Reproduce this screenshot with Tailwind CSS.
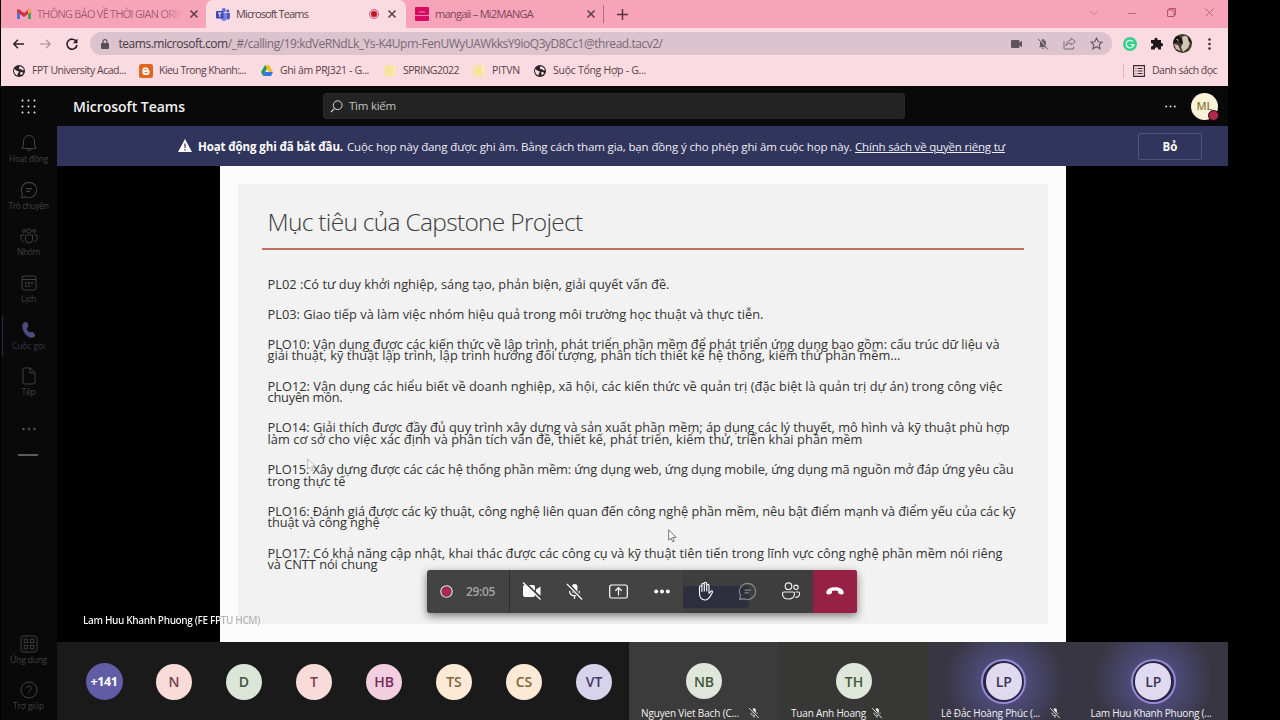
<!DOCTYPE html>
<html lang="vi">
<head>
<meta charset="utf-8">
<title>Microsoft Teams</title>
<script src="https://cdn.jsdelivr.net/npm/@tailwindcss/browser@4"></script>
</head>
<body class="h-[720px] w-[1280px] overflow-hidden bg-black pl-px font-['Open_Sans','Noto_Sans',sans-serif] [font-stretch:93%]">
<svg class="hidden">
  <symbol id="x" viewBox="0 0 10 10"><path d="M1.5 1.5l7 7M8.5 1.5l-7 7" stroke="currentColor" stroke-width="1.5" fill="none"/></symbol>
  <symbol id="globe" viewBox="0 0 12 12"><circle cx="6" cy="6" r="6" fill="#2b2428"/><path d="M1 4.2c1.800 .2 2.200 1.600 3.600 1.700 1.600.1 1.500 1.500.6 2.200-.8.700-.3 1.700-1 2.400C2.400 9.700 1.200 8 1 6zM6.600 1.200c.2 1-1 1.200-.6 2.200.5 1 1.900.2 2.500 1.200.5.900 1.500.6 2.400.3-.2-1.500-1.800-3.400-4.300-3.700zM7.500 7.300c1-.5 2 .1 2.700.6-.6 1-1.300 1.800-2.300 2.300-.3-1-1.200-1.800-.4-2.900z" fill="#fadbe1"/></symbol>
  <symbol id="folder" viewBox="0 0 12 12"><rect x=".5" y=".5" width="11" height="11" rx="1" fill="#f6e49c"/><path d="M9 .5h2.500v8L9 11z" fill="#f9ecb8"/></symbol>
  <symbol id="micoff" viewBox="0 0 20 20"><rect x="7.300" y="2" width="5.800" height="10" rx="2.900" fill="currentColor"/><path d="M4.800 9.500c0 3 2.200 5 5.200 5s5.200-2 5.200-5M10 14.500V18" fill="none" stroke="currentColor" stroke-width="1.300"/><path d="M2.500 1.500L18 18.500" stroke="#3e3e3e" stroke-width="3.600"/><path d="M2 2l16 16.500" stroke="currentColor" stroke-width="1.400"/></symbol>
  <symbol id="chat" viewBox="0 0 20 20"><path d="M10 1.500a8.500 8.500 0 1 1-4 16L1.700 18.600l1.100-4.200A8.500 8.500 0 0 1 10 1.500zM6.800 8.500h6.600M6.800 11.500h4.500" fill="none" stroke="currentColor" stroke-width="1.200" stroke-linejoin="round"/></symbol>
</svg>

<div class="flex h-full w-[1227px] flex-col">
  <!-- browser tabs -->
  <header class="flex h-[86px] shrink-0 flex-col bg-[#fadbe1] text-[11px] text-[#5b3e4a]">
    <div class="flex h-7 items-center bg-[#f7a3b9]">
      <div class="flex h-full w-[205px] items-center pl-4">
        <svg class="h-[11px] w-[14px]" viewBox="0 0 14 11"><path d="M0 1.500V10h3V5z" fill="#4a78d8"/><path d="M14 1.500V10h-3V5z" fill="#45a35b"/><path d="M0 1.800C0 .3 1.800 0 2.800.8L7 4l4.200-3.200c1-.8 2.800-.5 2.800 1V3L7 8 0 3z" fill="#cf3542"/><path d="M11 1l2-.8 1 1.300V3l-3 2z" fill="#e9b93e"/></svg>
        <span data-fit class="ml-[6px] w-[145px] whitespace-nowrap bg-linear-to-r from-[#9c5c72] from-88% to-[#f7a3b9] bg-clip-text text-transparent">THÔNG BÁO VỀ THỜI GIAN ORIE</span>
        <svg class="ml-[7px] size-[10px]"><use href="#x"/></svg>
      </div>
      <div class="flex h-full w-[200px] items-center rounded-t-[7px] bg-[#fadbe1] pl-[10px]">
        <svg class="h-[13px] w-[14px]" viewBox="0 0 14 13"><circle cx="11.800" cy="3" r="1.500" fill="#5059c9"/><circle cx="7.800" cy="2.200" r="2.100" fill="#6a72d8"/><path d="M9 5h5v4c0 2-1.500 3-3 2.500z" fill="#5059c9"/><path d="M5 5h6v4.500C11 12 9.500 13 8 13s-3-1-3-3z" fill="#7680e0"/><rect y="3" width="7.500" height="7.500" rx=".8" fill="#3f49b4"/><path d="M2 5h3.600M3.800 5v4" stroke="#fff" stroke-width="1"/></svg>
        <span data-fit class="ml-[6px] w-[72px] whitespace-nowrap">Microsoft Teams</span>
        <svg class="ml-[61px] size-[10px]" viewBox="0 0 10 10"><circle cx="5" cy="5" r="4.400" fill="none" stroke="#b9303f" stroke-width=".8"/><circle cx="5" cy="5" r="3" fill="#bd1526"/></svg>
        <svg class="ml-[8px] size-[10px]"><use href="#x"/></svg>
      </div>
      <svg class="ml-[9px] size-[14px]" viewBox="0 0 14 14"><rect width="14" height="14" rx="1" fill="#d80b62"/><path d="M0 8.500h14M4 5h6" stroke="#f383b4" stroke-width="1.200"/></svg>
      <span data-fit class="ml-[6px] w-[98px] whitespace-nowrap text-[#7d4659]">mangaii – Mi2MANGA</span>
      <svg class="ml-[53px] size-[10px]"><use href="#x"/></svg>
      <i class="ml-[7px] h-[18px] w-px bg-[#b76b80]"></i>
      <svg class="ml-[13px] size-[11px]" viewBox="0 0 11 11"><path d="M5.500 0v11M0 5.500h11" stroke="#5b2f3e" stroke-width="1.400"/></svg>
      <svg class="ml-[461px] mb-[3px] h-[6px] w-[10px]" viewBox="0 0 10 6"><path d="M1 1l4 3.500L9 1" fill="none" stroke="#d0809a"/></svg>
      <svg class="ml-[29px] mb-[3px] h-[10px] w-[8px]" viewBox="0 0 8 10"><path d="M0 5.500h8" stroke="#b9647e"/></svg>
      <svg class="ml-[31px] mb-[3px] size-[9px]" viewBox="0 0 9 9"><path d="M.5 2h6.500v6.500H.5zM2 2V.5h6.500V7H7" fill="none" stroke="#b9506e"/></svg>
      <svg class="ml-[29px] mb-[3px] size-[9px]" viewBox="0 0 9 9"><path d="M.5.500l8 8M8.500.500l-8 8" stroke="#b9647e" fill="none"/></svg>
    </div>
    <!-- address bar -->
    <div class="flex h-[31px] items-center pl-3">
      <svg class="h-[10px] w-[11px]" viewBox="0 0 11 10"><path d="M11 5H1M5 .8L.8 5 5 9.200" fill="none" stroke="#2a2025" stroke-width="1.400"/></svg>
      <svg class="ml-4 h-[10px] w-[11px]" viewBox="0 0 11 10"><path d="M0 5h10M6 .8L10.200 5 6 9.200" fill="none" stroke="#a58b95" stroke-width="1.200"/></svg>
      <svg class="ml-[15px] size-[12px]" viewBox="0 0 12 12"><path d="M10.300 3.500A5 5 0 1 0 11 7" fill="none" stroke="#2a2025" stroke-width="1.600"/><path d="M11.500.5v4.700H6.800z" fill="#2a2025"/></svg>
      <div class="ml-[12px] flex h-[23px] w-[1022px] items-center rounded-full bg-[#dcc3cd] pl-[11px] text-[12px] text-[#7b6872]">
        <svg class="h-[10px] w-[8px]" viewBox="0 0 8 10"><rect y="4" width="8" height="6" rx="1" fill="#5a4c55"/><path d="M2 4V2.700a2 2 0 0 1 4 0V4" fill="none" stroke="#5a4c55" stroke-width="1.200"/></svg>
        <span data-fit class="ml-[9.500px] w-[544px] whitespace-nowrap"><span class="text-[#4a3a43]">teams.microsoft.com</span>/_#/calling/19:kdVeRNdLk_Ys-K4Uprn-FenUWyUAWkksY9ioQ3yD8Cc1@thread.tacv2/</span>
        <svg class="ml-[348px] h-[8px] w-[11px]" viewBox="0 0 11 8"><rect width="8.500" height="8" rx="1" fill="#5f545c"/><path d="M8 3l3-2.300v6.600L8 5z" fill="#5f545c"/></svg>
        <svg class="ml-[15px] size-[12px]" viewBox="0 0 12 12"><path d="M2 9.300h8L9 8V5a3 3 0 0 0-6 0v3zM5 10h2a1 1 0 0 1-2 0zM5.200 2V1h1.600v1z" fill="#665a62"/><path d="M2 .5l9 10.800" stroke="#dcc3cd" stroke-width="1.100"/><path d="M1 .8l9.700 10.700" stroke="#665a62"/></svg>
        <svg class="ml-[14px] size-[13px]" viewBox="0 0 13 13"><path d="M1 4v8h9.500V9.500M8 3V1l4.500 3.700L8 8V6C5.500 6 4 7 3 9c.2-3.500 2-5.700 5-6z" fill="none" stroke="#7d6c76"/></svg>
        <svg class="ml-[14px] size-[13px]" viewBox="0 0 13 13"><path d="M6.500 1l1.700 3.700 4 .4-3 2.700.9 4-3.600-2.100-3.600 2.100.9-4-3-2.700 4-.4z" fill="none" stroke="#66565f" stroke-width="1.100"/></svg>
      </div>
      <svg class="ml-[11px] size-[14px]" viewBox="0 0 14 14"><circle cx="7" cy="7" r="7" fill="#38cf8c"/><path d="M9.800 4.500A3.800 3.800 0 1 0 10.800 7.500H7.500M9.500 7.500l1.300 1.800" fill="none" stroke="#e8fff4" stroke-width="1.200"/></svg>
      <svg class="ml-[13px] size-[13px]" viewBox="0 0 13 13"><path d="M1 3h3.500a1.600 1.600 0 1 1 3 0H11v3.200a1.600 1.600 0 1 1 0 3V12.500H8a1.600 1.600 0 1 0-3 0H1V9.300a1.600 1.600 0 1 0 0-3z" fill="#1e181b"/></svg>
      <svg class="ml-[10px] size-[19px]" viewBox="0 0 19 19"><defs><clipPath id="pc"><circle cx="9.500" cy="9.500" r="9.500"/></clipPath></defs><g clip-path="url(#pc)"><path d="M0 0h19v19H0z" fill="#44392f"/><path d="M2 0l6 4 2 6-5-2-5 1z" fill="#151014"/><path d="M9 3c3-2 6-1 6 2l2 4-2 5-5 4-2-5 2-4z" fill="#cfc6b4"/><path d="M1 10l4 1 3 6-5-2zM3 5l2 0 1 3z" fill="#d3b6b0"/><path d="M15 2l4 7-3-1z" fill="#1b1412"/></g></svg>
      <svg class="ml-[16px] h-[12px] w-[3px]" viewBox="0 0 3 12"><g fill="#3e2f37"><circle cx="1.500" cy="1.500" r="1.300"/><circle cx="1.500" cy="6" r="1.300"/><circle cx="1.500" cy="10.500" r="1.300"/></g></svg>
    </div>
    <!-- bookmarks -->
    <div class="flex h-[23px] items-center pl-3 text-[10.500px]">
      <svg class="size-[12px]"><use href="#globe"/></svg>
      <span data-fit class="ml-[7px] w-[94px] whitespace-nowrap">FPT University Acad...</span>
      <svg class="ml-[13px] size-[14px]" viewBox="0 0 14 14"><rect width="14" height="14" rx="2.500" fill="#e0661c"/><path d="M5.500 3.500h2a2 2 0 0 1 2 2c0 .8.300 1 1 1V9a2 2 0 0 1-2 2h-3a2 2 0 0 1-2-2V5.500a2 2 0 0 1 2-2z" fill="#fff"/><path d="M5.500 5.700h2M5.500 8.700h3" stroke="#e0661c" stroke-width="1"/></svg>
      <span data-fit class="ml-[6px] w-[87px] whitespace-nowrap">Kieu Trong Khanh:...</span>
      <svg class="ml-[15px] h-[11px] w-[12px]" viewBox="0 0 12 11"><path d="M4 0h4l4 7H8z" fill="#f2bd2a"/><path d="M4 0l2 3.500L2 11 0 7z" fill="#249a55"/><path d="M3.800 7H12l-2 4H2z" fill="#3373e3"/></svg>
      <span data-fit class="ml-[7px] w-[89px] whitespace-nowrap">Ghi âm PRJ321 - G...</span>
      <svg class="ml-[15px] size-[12px]"><use href="#folder"/></svg>
      <span data-fit class="ml-[7px] w-[56px] whitespace-nowrap">SPRING2022</span>
      <svg class="ml-[14px] size-[12px]"><use href="#folder"/></svg>
      <span data-fit class="ml-[7px] w-[28px] whitespace-nowrap">PITVN</span>
      <svg class="ml-[14px] size-[12px]"><use href="#globe"/></svg>
      <span data-fit class="ml-[7px] w-[93px] whitespace-nowrap">Suộc Tổng Hợp - G...</span>
      <i class="ml-[477px] h-[14px] w-px bg-[#dfb7c1]"></i>
      <svg class="ml-[9px] size-[12px]" viewBox="0 0 12 12"><path d="M.6.600h10.800v10.800H.6zM2.500 3.500h1M2.500 6h1M2.500 8.500h1M4.700 3.500h4.800M4.700 6h4.800M4.700 8.500h4.800" fill="none" stroke="#3b2731" stroke-width="1.100"/></svg>
      <span data-fit class="ml-[7px] w-[65px] whitespace-nowrap">Danh sách đọc</span>
    </div>
    <div class="h-[4px]"></div>
  </header>

  <!-- Teams title bar -->
  <div class="flex h-10 shrink-0 items-center bg-[#090909] pl-5">
    <svg class="size-[15px]" viewBox="0 0 15 15"><g fill="#e8e8e8"><circle cx="1.500" cy="1.500" r="1"/><circle cx="7.500" cy="1.500" r="1"/><circle cx="13.500" cy="1.500" r="1"/><circle cx="1.500" cy="7.500" r="1"/><circle cx="7.500" cy="7.500" r="1"/><circle cx="13.500" cy="7.500" r="1"/><circle cx="1.500" cy="13.500" r="1"/><circle cx="7.500" cy="13.500" r="1"/><circle cx="13.500" cy="13.500" r="1"/></g></svg>
    <h1 data-fit class="ml-[37px] w-[112px] whitespace-nowrap text-[14px] font-semibold text-[#f2f2f2]">Microsoft Teams</h1>
    <div class="ml-[138px] flex h-[26px] w-[582px] items-center rounded-[3px] border border-[#292929] bg-[#232323] pl-[6px]">
      <svg class="size-[13px]" viewBox="0 0 13 13"><circle cx="7.700" cy="5.200" r="4.400" fill="none" stroke="#d5d5d5"/><path d="M4.600 8.400L1 12" stroke="#d5d5d5" stroke-width="1.100"/></svg>
      <span data-fit class="ml-[6px] w-[47px] whitespace-nowrap text-[11.500px] text-[#c4c4c4]">Tìm kiếm</span>
    </div>
    <svg class="ml-[260px] h-[3px] w-[11px]" viewBox="0 0 11 3"><g fill="#ddd"><circle cx="1.200" cy="1.500" r="1"/><circle cx="5.500" cy="1.500" r="1"/><circle cx="9.800" cy="1.500" r="1"/></g></svg>
    <div class="relative ml-[15px] flex size-[27px] items-center justify-center rounded-full bg-[#fcf2d8] text-[11px] font-semibold text-[#8a7a45]">ML<i class="absolute -bottom-px -right-px size-[11px] rounded-full border border-[#24060e] bg-[#b3284f]"></i></div>
  </div>

  <div class="flex min-h-0 flex-1">
    <!-- app rail -->
    <nav class="flex w-14 shrink-0 flex-col bg-[#090909] pr-px text-[8.500px] leading-3 text-[#414141]">
      <div class="flex h-[46.700px] flex-col items-center gap-px pt-2"><svg class="size-[18px]" viewBox="0 0 18 18"><path d="M9 1.500a5.500 5.500 0 0 0-5.500 5.500v4L2 14.500h14L14.500 11V7A5.500 5.500 0 0 0 9 1.500zM7 14.700a2 2 0 0 0 4 0" fill="none" stroke="currentColor"/></svg><span data-fit class="w-[39px] whitespace-nowrap">Hoạt động</span></div>
      <div class="flex h-[46.700px] flex-col items-center gap-px pt-2"><svg class="size-[18px]"><use href="#chat"/></svg><span data-fit class="w-[40px] whitespace-nowrap">Trò chuyện</span></div>
      <div class="flex h-[46.700px] flex-col items-center gap-px pt-2"><svg class="size-[18px]" viewBox="0 0 18 18"><g fill="none" stroke="currentColor"><circle cx="9" cy="4" r="2.200"/><circle cx="3.800" cy="3.800" r="1.500"/><circle cx="14.200" cy="3.800" r="1.500"/><path d="M5.500 8h7v4.500a3.500 3.500 0 0 1-7 0zM4 8H1v3.500c0 2 1.200 3 3 3.300M14 8h3v3.500c0 2-1.200 3-3 3.300"/></g></svg><span data-fit class="w-[23px] whitespace-nowrap">Nhóm</span></div>
      <div class="flex h-[46.700px] flex-col items-center gap-px pt-2"><svg class="size-[18px]" viewBox="0 0 18 18"><g fill="none" stroke="currentColor"><rect x="2" y="2" width="14" height="14" rx="2"/><path d="M2 5.500h14"/></g><g fill="currentColor"><circle cx="6" cy="9" r="1"/><circle cx="9" cy="9" r="1"/><circle cx="12" cy="9" r="1"/><circle cx="6" cy="12" r="1"/><circle cx="9" cy="12" r="1"/></g></svg><span data-fit class="w-[15px] whitespace-nowrap">Lịch</span></div>
      <div class="relative flex h-[46.700px] flex-col items-center gap-px pt-2"><i class="absolute left-px top-[3px] h-[40px] w-px bg-[#2b2b4b]"></i><svg class="size-[18px]" viewBox="0 0 18 18"><path d="M4 1.500c1.500-1 3-.6 3.500.5l.8 2c.3.900 0 1.600-.6 2.200l-1 1c.4 1.700 1.500 3.300 3 4.300l1.400-.5c.8-.3 1.600-.1 2.200.5l1.400 1.500c.8.900.6 2-.3 2.700-1.500 1.400-3.800 1.500-6 .1C4.800 13.400 2.500 9.500 2.300 5.500 2.200 3.700 2.900 2.300 4 1.500z" fill="#4d4b80"/></svg><span data-fit class="w-[33px] whitespace-nowrap text-[#38384a]">Cuộc gọi</span></div>
      <div class="flex h-[46.700px] flex-col items-center gap-px pt-2"><svg class="size-[18px]" viewBox="0 0 18 18"><path d="M4.500 1h6L15 5.500v9.500a2 2 0 0 1-2 2H5a2 2 0 0 1-2-2V2.500C3 1.700 3.700 1 4.500 1zM10 1.200V6h5" fill="none" stroke="currentColor"/></svg><span data-fit class="w-[14px] whitespace-nowrap">Tệp</span></div>
      <svg class="ml-[20.500px] mt-[21px] h-[4px] w-[14px]" viewBox="0 0 14 4"><g fill="#555"><circle cx="1.500" cy="2" r="1.200"/><circle cx="7" cy="2" r="1.200"/><circle cx="12.500" cy="2" r="1.200"/></g></svg>
      <i class="ml-[17px] mt-[23px] h-[2px] w-5 bg-[#5a5a5a]"></i>
      <div class="mt-auto flex h-[46.700px] flex-col items-center gap-px pt-2"><svg class="size-[18px]" viewBox="0 0 18 18"><g fill="none" stroke="currentColor"><rect x="1" y="1" width="16" height="16" rx="2.500"/><rect x="4.200" y="4.200" width="3.400" height="3.400"/><rect x="10.400" y="4.200" width="3.400" height="3.400"/><rect x="4.200" y="10.400" width="3.400" height="3.400"/><rect x="10.400" y="10.400" width="3.400" height="3.400"/></g></svg><span data-fit class="w-[37px] whitespace-nowrap">Ứng dụng</span></div>
      <div class="flex h-[46.700px] flex-col items-center gap-px pt-2"><svg class="size-[18px]" viewBox="0 0 18 18"><g fill="none" stroke="currentColor"><circle cx="9" cy="9" r="8"/><path d="M6.700 7.200A2.300 2.300 0 1 1 9.900 9.300c-.7.400-.9.700-.9 1.700M9 12.300v1.200"/></g></svg><span data-fit class="w-[31px] whitespace-nowrap">Trợ giúp</span></div>
    </nav>

    <main class="flex w-[1171px] flex-col">
      <!-- recording banner -->
      <div class="flex h-10 shrink-0 items-center bg-[#31345b] pl-[121px] pt-px text-[11.500px] text-[#eeeef6]">
        <svg class="mb-[2px] h-[13px] w-[14px]" viewBox="0 0 14 13"><path d="M7 0l7 13H0z" fill="#fff"/><path d="M7 4.500V9M7 10v1.500" stroke="#31345b" stroke-width="1.200"/></svg>
        <b data-fit class="ml-[6px] w-[145px] whitespace-nowrap font-bold text-white">Hoạt động ghi đã bắt đầu.</b>
        <span data-fit class="ml-[4px] w-[505px] whitespace-nowrap">Cuộc họp này đang được ghi âm. Bằng cách tham gia, bạn đồng ý cho phép ghi âm cuộc họp này.</span>
        <a data-fit class="ml-[3px] w-[150px] whitespace-nowrap underline">Chính sách về quyền riêng tư</a>
        <div class="mb-px ml-[133px] flex h-[27px] w-[64px] items-center justify-center rounded-[2px] border border-[#52557b] pt-px font-bold text-white">Bỏ</div>
      </div>

      <!-- shared screen -->
      <section class="relative flex h-[476px] shrink-0 bg-black pl-[162.500px]">
        <div class="h-full w-[846.500px] bg-[#fcfcfd] px-[18px] pt-[18px]">
          <article class="h-[440px] bg-[#f2f2f2] pl-[24px] pt-[19px]">
            <h2 data-fit class="ml-[6px] w-[315px] whitespace-nowrap text-[24.500px] font-light leading-[38px] text-[#3c3c3c]">Mục tiêu của Capstone Project</h2>
            <div class="mt-[7px] h-[2px] w-[762px] bg-[#c4705f]"></div>
            <div class="ml-[6px] mt-[28.500px] flex flex-col gap-[18.800px] text-[12.800px] leading-[11.450px] text-[#323232] [font-stretch:100%]">
              <p data-fit class="w-[402px] whitespace-nowrap">PL02 :Có tư duy khởi nghiệp, sáng tạo, phản biện, giải quyết vấn đề.</p>
              <p data-fit class="w-[496px] whitespace-nowrap">PL03: Giao tiếp và làm việc nhóm hiệu quả trong môi trường học thuật và thực tiễn.</p>
              <div><p data-fit class="w-[732px] whitespace-nowrap">PLO10: Vận dụng được các kiến thức về lập trình, phát triển phần mềm để phát triển ứng dụng bao gồm: cấu trúc dữ liệu và</p><p data-fit class="w-[633px] whitespace-nowrap">giải thuật, kỹ thuật lập trình, lập trình hướng đối tượng, phân tích thiết kế hệ thống, kiểm thử phần mềm...</p></div>
              <div><p data-fit class="w-[735px] whitespace-nowrap">PLO12: Vận dụng các hiểu biết về doanh nghiệp, xã hội, các kiến thức về quản trị (đặc biệt là quản trị dự án) trong công việc</p><p data-fit class="w-[75px] whitespace-nowrap">chuyên môn.</p></div>
              <div><p data-fit class="w-[742px] whitespace-nowrap">PLO14: Giải thích được đầy đủ quy trình xây dựng và sản xuất phần mềm; áp dụng các lý thuyết, mô hình và kỹ thuật phù hợp</p><p data-fit class="w-[595px] whitespace-nowrap">làm cơ sở cho việc xác định và phân tích vấn đề, thiết kế, phát triển, kiểm thử, triển khai phần mềm</p></div>
              <div><p data-fit class="w-[746px] whitespace-nowrap">PLO15: Xây dựng được các các hệ thống phần mềm: ứng dụng web, ứng dụng mobile, ứng dụng mã nguồn mở đáp ứng yêu cầu</p><p data-fit class="w-[78px] whitespace-nowrap">trong thực tế</p></div>
              <div><p data-fit class="w-[748px] whitespace-nowrap">PLO16: Đánh giá được các kỹ thuật, công nghệ liên quan đến công nghệ phần mềm, nêu bật điểm mạnh và điểm yếu của các kỹ</p><p data-fit class="w-[112px] whitespace-nowrap">thuật và công nghệ</p></div>
              <div><p data-fit class="w-[735px] whitespace-nowrap">PLO17: Có khả năng cập nhật, khai thác được các công cụ và kỹ thuật tiên tiến trong lĩnh vực công nghệ phần mềm nói riêng</p><p data-fit class="w-[110px] whitespace-nowrap">và CNTT nói chung</p></div>
            </div>
          </article>
        </div>
        <!-- presenter name over the share -->
        <span data-fit class="absolute left-[26px] top-[447px] w-[177px] whitespace-nowrap bg-linear-to-r from-white from-77% to-[#b5b5b5] to-78% bg-clip-text text-[10px] leading-[15px] font-semibold text-transparent">Lam Huu Khanh Phuong (FE FPTU HCM)</span>
        <!-- mouse pointers -->
        <svg class="absolute left-[250px] top-[292px] h-[14px] w-[9px]" viewBox="0 0 9 14"><path d="M.7.800v10.400l2.400-2.200 1.600 3.800 1.600-.7-1.600-3.700h3.400z" fill="#fafafa" stroke="#aaa" stroke-width=".8"/></svg>
        <svg class="absolute left-[610.500px] top-[363px] h-[14px] w-[9px]" viewBox="0 0 9 14"><path d="M.7.800v10.400l2.400-2.200 1.600 3.800 1.600-.7-1.600-3.700h3.400z" fill="#fff" stroke="#555" stroke-width=".8"/></svg>
        <!-- call controls -->
        <div class="absolute left-[370px] top-[403.500px] flex h-[43px] w-[430px] overflow-visible rounded-[3px] bg-[#444343] text-white shadow-[0_3px_8px_rgba(0,0,0,0.5)]">
          <div class="flex w-[83px] items-center border-r border-[#2e2e2e] pl-[13px]">
            <svg class="size-[13px]" viewBox="0 0 13 13"><circle cx="6.500" cy="6.500" r="5.700" fill="none" stroke="#f3e8eb" stroke-width="1.100"/><circle cx="6.500" cy="6.500" r="4.400" fill="#b52550"/></svg>
            <span data-fit class="ml-[13px] w-[29px] whitespace-nowrap pt-px text-[12px] font-semibold text-[#a3a3a3]">29:05</span>
          </div>
          <div class="flex w-[43.300px] items-center justify-center"><svg class="size-5" viewBox="0 0 20 20"><path d="M1 6a2 2 0 0 1 2-2h8a2 2 0 0 1 2 2v8a2 2 0 0 1-2 2H3a2 2 0 0 1-2-2zM14 8.500l4.500-3v9L14 11.500z" fill="#fff"/><path d="M2.500 1L19.500 17.500" stroke="#444343" stroke-width="2"/><path d="M1 1.500l17.500 17" stroke="#fff" stroke-width="1.300"/></svg></div>
          <div class="flex w-[43.300px] items-center justify-center"><svg class="size-[19px]"><use href="#micoff"/></svg></div>
          <div class="flex w-[43.300px] items-center justify-center"><svg class="h-[15px] w-[19px]" viewBox="0 0 19 15"><rect x=".7" y="1" width="17.600" height="13" rx="1.800" fill="none" stroke="#fff" stroke-width="1.200"/><path d="M9.500 11.500V4M6.300 6.800l3.200-3.100 3.200 3.100" fill="none" stroke="#fff" stroke-width="1.200"/></svg></div>
          <div class="flex w-[43.300px] items-center justify-center"><svg class="h-[5px] w-[16px]" viewBox="0 0 16 5"><g fill="#fff"><circle cx="2.200" cy="2.500" r="2"/><circle cx="8" cy="2.500" r="2"/><circle cx="13.800" cy="2.500" r="2"/></g></svg></div>
          <div class="relative flex w-[130px] items-center bg-[#3f3e3e]">
            <i class="absolute left-0 top-[16px] h-[22px] w-[66px] rounded-[2px] bg-[#2d2e3e]"></i>
            <svg class="relative ml-[11.500px] size-[20px]" viewBox="0 0 20 20"><path d="M4.500 12V6a1.200 1.200 0 0 1 2.400 0v4.500V3.500a1.200 1.200 0 0 1 2.400 0v6.500V2.500a1.200 1.200 0 0 1 2.400 0V10 4.500a1.150 1.150 0 0 1 2.300 0v7.800l1.900-2c.8-.8 2-.3 1.700.7-1.900 3.500-3.300 7.800-7 8-3.900.3-6.100-2.200-6.100-7z" fill="none" stroke="#fff" stroke-width="1.100" stroke-linejoin="round"/></svg>
            <svg class="relative ml-[23.500px] size-[19px] text-[#888]"><use href="#chat"/></svg>
            <svg class="relative ml-[24px] size-[20px]" viewBox="0 0 20 20"><g fill="none" stroke="#eee" stroke-width="1.150"><circle cx="7.500" cy="5.200" r="3.300"/><circle cx="15" cy="6.300" r="2.200"/><path d="M3 11h9a1.500 1.500 0 0 1 1.500 1.500c0 3.500-2 5.500-6 5.500s-6-2-6-5.500A1.500 1.500 0 0 1 3 11zM14.500 11h2.800c.8 0 1.300.6 1.300 1.400 0 2.600-1.400 3.900-4.300 3.900"/></g></svg>
          </div>
          <div class="flex flex-1 items-center justify-center rounded-r-[3px] bg-[#962145]"><svg class="h-[8px] w-[18px]" viewBox="0 0 18 8"><path d="M9 .3c4.500 0 8.500 1.800 8.700 5.200 0 1.500-.9 2.200-2.200 1.900l-2-.4c-1-.2-1.500-.8-1.500-1.700l.1-1.400C10.500 3.200 7.500 3.200 5.900 3.900L6 5.300c0 .9-.5 1.500-1.500 1.700l-2 .4C1.200 7.700.3 7 .3 5.500.5 2.100 4.500.3 9 .3z" fill="#fff"/></svg></div>
        </div>
      </section>

      <!-- participants -->
      <footer class="flex min-h-0 flex-1 text-[14px] font-semibold">
        <div class="flex w-[572px] shrink-0 items-center bg-[#1b1a1a] pl-[28.500px] pt-px">
          <div class="flex size-[37px] items-center justify-center rounded-full bg-[#605ca6] pt-px text-white"><span data-fit class="w-[27px] whitespace-nowrap text-[12.500px] font-bold">+141</span></div>
          <div class="ml-[33.500px] flex gap-[34px]">
            <span class="flex size-9 items-center justify-center rounded-full bg-[#f9dcd9] text-[#77404a]">N</span>
            <span class="flex size-9 items-center justify-center rounded-full bg-[#dbe5d8] text-[#41543d]">D</span>
            <span class="flex size-9 items-center justify-center rounded-full bg-[#f9dcd9] text-[#77404a]">T</span>
            <span class="flex size-9 items-center justify-center rounded-full bg-[#f1cfe0] text-[#762c58]">HB</span>
            <span class="flex size-9 items-center justify-center rounded-full bg-[#fcead7] text-[#80643a]">TS</span>
            <span class="flex size-9 items-center justify-center rounded-full bg-[#fcead7] text-[#80643a]">CS</span>
            <span class="flex size-9 items-center justify-center rounded-full bg-[#d7d3ec] text-[#423968]">VT</span>
          </div>
        </div>
        <div class="flex w-[150px] flex-col items-center bg-[#3c3b3b] pt-[21px]">
          <span class="flex size-9 shrink-0 items-center justify-center rounded-full bg-[#dfe7da] text-[#43573c]">NB</span>
          <div class="mt-[7px] flex w-full items-center pl-3 text-[10px] font-medium leading-[14px] text-[#f2f2f2]"><span data-fit class="w-[98px] whitespace-nowrap">Nguyen Viet Bach (C...</span><svg class="ml-[9px] size-[12px]"><use href="#micoff"/></svg></div>
        </div>
        <div class="flex w-[150px] flex-col items-center bg-[#373736] pt-[21px]">
          <span class="flex size-9 shrink-0 items-center justify-center rounded-full bg-[#dfe7da] text-[#43573c]">TH</span>
          <div class="mt-[7px] flex w-full items-center pl-3 text-[10px] font-medium leading-[14px] text-[#f2f2f2]"><span data-fit class="w-[75px] whitespace-nowrap">Tuan Anh Hoang</span><svg class="ml-[5px] size-[12px]"><use href="#micoff"/></svg></div>
        </div>
        <div class="flex w-[149.500px] flex-col items-center bg-radial-[circle_at_50%_50%] from-[#504e80] from-20% to-[#393644] to-70% pt-[17px]">
          <span class="flex size-[45px] shrink-0 items-center justify-center rounded-full border-2 border-[#978bd6] bg-[#2b2545] p-[2.500px]"><b class="flex size-[37px] items-center justify-center rounded-full bg-[#dfdaf0] font-semibold text-[#3a3354]">LP</b></span>
          <div class="mt-[2px] flex w-full items-center pl-3 text-[10px] font-medium leading-[14px] text-[#f2f2f2]"><span data-fit class="w-[99px] whitespace-nowrap">Lê Đắc Hoàng Phúc (...</span><svg class="ml-[9px] size-[12px]"><use href="#micoff"/></svg></div>
        </div>
        <div class="flex flex-1 flex-col items-center bg-radial-[circle_at_50%_50%] from-[#504e80] from-20% to-[#393644] to-70% pt-[17px]">
          <span class="flex size-[45px] shrink-0 items-center justify-center rounded-full border-2 border-[#978bd6] bg-[#2b2545] p-[2.500px]"><b class="flex size-[37px] items-center justify-center rounded-full bg-[#dfdaf0] font-semibold text-[#3a3354]">LP</b></span>
          <div class="mt-[2px] flex w-full items-center pl-3 text-[10px] font-medium leading-[14px] text-[#f2f2f2]"><span data-fit class="w-[121px] whitespace-nowrap">Lam Huu Khanh Phuong (...</span></div>
        </div>
      </footer>
    </main>
  </div>
</div>
<script>
  // Spread each label's letters across the width of its box.
  function fitLabels() {
    document.querySelectorAll('[data-fit]').forEach(function (el) {
      el.style.flexShrink = 0;
      el.style.letterSpacing = '0px';
      var box = el.getBoundingClientRect().width;
      var range = document.createRange();
      range.selectNodeContents(el);
      var natural = range.getBoundingClientRect().width;
      el.style.letterSpacing = (box - natural) / Array.from(el.textContent.normalize('NFC')).length + 'px';
    });
  }
  window.addEventListener('load', function () {
    fitLabels();
    requestAnimationFrame(fitLabels);
    setTimeout(fitLabels, 60);
  });
</script>
</body>
</html>
